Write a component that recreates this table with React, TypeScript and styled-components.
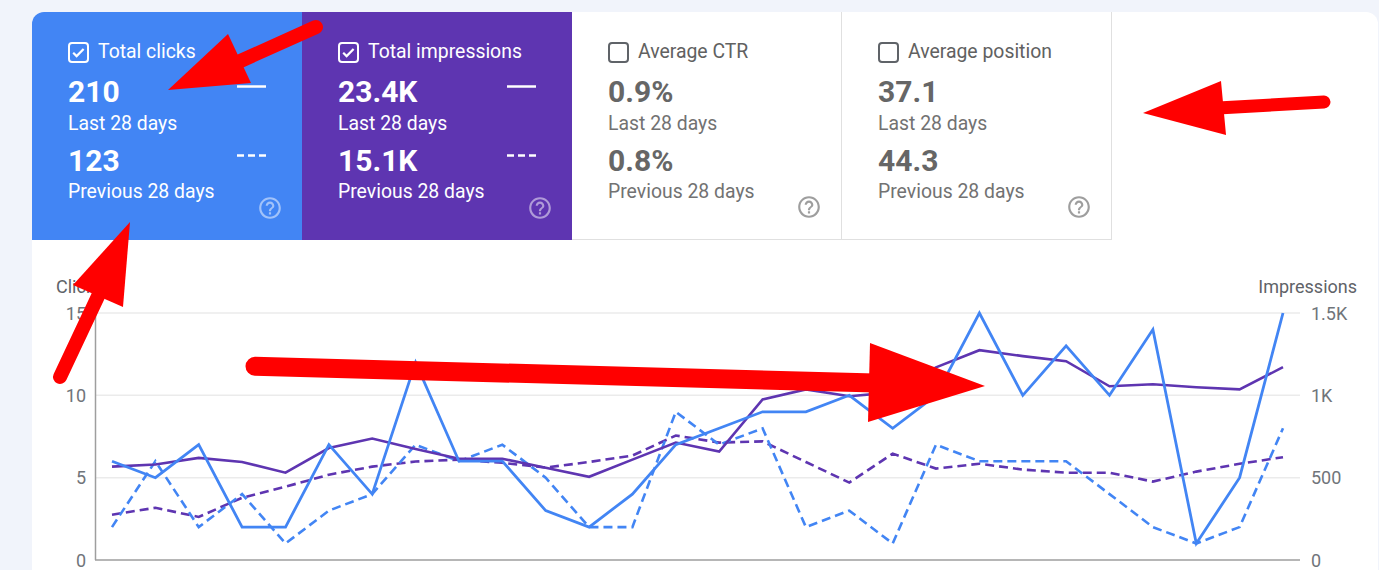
import React from "react";
import styled, { createGlobalStyle, css } from "styled-components";

const GlobalStyle = createGlobalStyle`
  html, body { margin: 0; padding: 0; }
  body {
    background: #f1f4fb;
    font-family: Roboto, "Liberation Sans", Arial, sans-serif;
    overflow: hidden;
  }
`;

type Variant = "clicks" | "impressions" | "plain";

const Panel = styled.div`
  margin: 12px 1px 0 32px;
  background: #ffffff;
  border-radius: 12px 12px 0 0;
  overflow: hidden;
  height: 558px;
  display: flex;
  flex-direction: column;
`;

const CardsRow = styled.div`
  display: flex;
  flex: none;
`;

const MetricCard = styled.div<{ $variant: Variant }>`
  position: relative;
  box-sizing: border-box;
  width: 270px;
  height: 228px;
  padding: 28px 36px 0 36px;
  display: flex;
  flex-direction: column;
  ${(p) =>
    p.$variant === "clicks"
      ? css`
          background: #4285f4;
          color: #ffffff;
        `
      : p.$variant === "impressions"
      ? css`
          background: #5e35b1;
          color: #ffffff;
        `
      : css`
          background: #ffffff;
          color: #616161;
          border-right: 1px solid #e0e0e0;
          border-bottom: 1px solid #e0e0e0;
        `}
`;

const TitleRow = styled.div`
  display: flex;
  align-items: center;
  gap: 9px;
  height: 24px;
`;

const Title = styled.span<{ $muted: boolean }>`
  font-size: 19.4px;
  line-height: 24px;
  color: ${(p) => (p.$muted ? "#616161" : "#ffffff")};
`;

const ValueRow = styled.div<{ $top: number }>`
  display: flex;
  justify-content: space-between;
  align-items: flex-start;
  margin-top: ${(p) => p.$top}px;
`;

const Value = styled.span<{ $muted: boolean }>`
  font-size: 30px;
  line-height: 38px;
  font-weight: 700;
  color: ${(p) => (p.$muted ? "#666666" : "#ffffff")};
`;

const PeriodLabel = styled.div<{ $muted: boolean; $top: number }>`
  font-size: 19.4px;
  line-height: 24px;
  margin-top: ${(p) => p.$top}px;
  color: ${(p) => (p.$muted ? "#727272" : "#ffffff")};
`;

const LegendMark = styled.svg`
  margin-top: 12px;
  flex: none;
`;

const HelpIcon = styled.svg<{ $muted: boolean }>`
  position: absolute;
  right: 19px;
  bottom: 19px;
  width: 26px;
  height: 26px;
  fill: ${(p) => (p.$muted ? "#9e9e9e" : "rgba(255,255,255,0.5)")};
`;

const ChartArea = styled.div`
  flex: 1;
  position: relative;
`;

const ChartSvg = styled.svg`
  display: block;
  font-family: Roboto, "Liberation Sans", Arial, sans-serif;
`;

const ArrowLayer = styled.svg`
  position: fixed;
  top: 0;
  left: 0;
  pointer-events: none;
  z-index: 10;
`;

function Checkbox({ checked, color }: { checked: boolean; color: string }) {
  return (
    <svg width="21" height="21" viewBox="0 0 21 21">
      <rect x="1" y="1" width="19" height="19" rx="3" fill="none" stroke={color} strokeWidth="2" />
      {checked && (
        <path d="M5.2 10.8 L8.6 14.1 L15.6 7" fill="none" stroke={color} strokeWidth="2.2" />
      )}
    </svg>
  );
}

const HELP_PATH =
  "M11 18h2v-2h-2v2zm1-16C6.48 2 2 6.48 2 12s4.48 10 10 10 10-4.48 10-10S17.52 2 12 2zm0 18c-4.41 0-8-3.590-8-8s3.59-8 8-8 8 3.59 8 8-3.59 8-8 8zm0-14c-2.21 0-4 1.79-4 4h2c0-1.1.9-2 2-2s2 .9 2 2c0 2-3 1.75-3 5h2c0-2.25 3-2.5 3-5 0-2.21-1.79-4-4-4z";

type Metric = {
  title: string;
  current: string;
  previous: string;
  variant: Variant;
  checked: boolean;
};

const metrics: Metric[] = [
  { title: "Total clicks", current: "210", previous: "123", variant: "clicks", checked: true },
  { title: "Total impressions", current: "23.4K", previous: "15.1K", variant: "impressions", checked: true },
  { title: "Average CTR", current: "0.9%", previous: "0.8%", variant: "plain", checked: false },
  { title: "Average position", current: "37.1", previous: "44.3", variant: "plain", checked: false },
];

function Card({ m }: { m: Metric }) {
  const muted = m.variant === "plain";
  const fg = muted ? "#5f6368" : "#ffffff";
  return (
    <MetricCard $variant={m.variant}>
      <TitleRow>
        <Checkbox checked={m.checked} color={fg} />
        <Title $muted={muted}>{m.title}</Title>
      </TitleRow>
      <ValueRow $top={9}>
        <Value $muted={muted}>{m.current}</Value>
        {!muted && (
          <LegendMark width="29" height="3" viewBox="0 0 29 3">
            <line x1="0" y1="1.5" x2="29" y2="1.5" stroke="#fff" strokeWidth="2.5" />
          </LegendMark>
        )}
      </ValueRow>
      <PeriodLabel $muted={muted} $top={1}>Last 28 days</PeriodLabel>
      <ValueRow $top={6}>
        <Value $muted={muted}>{m.previous}</Value>
        {!muted && (
          <LegendMark width="29" height="3" viewBox="0 0 29 3">
            <line x1="0" y1="1.5" x2="29" y2="1.5" stroke="#fff" strokeWidth="2.5" strokeDasharray="7 4" />
          </LegendMark>
        )}
      </ValueRow>
      <PeriodLabel $muted={muted} $top={0}>Previous 28 days</PeriodLabel>
      <HelpIcon $muted={muted} viewBox="0 0 24 24">
        <path d={HELP_PATH} />
      </HelpIcon>
    </MetricCard>
  );
}

const clicks = [6, 5, 7, 2, 2, 7, 4, 12, 6, 6, 3, 2, 4, 7, 8, 9, 9, 10, 8, 10, 15, 10, 13, 10, 14, 1, 5, 15];
const clicksPrev = [2, 6, 2, 4, 1, 3, 4, 7, 6, 7, 5, 2, 2, 9, 7, 8, 2, 3, 1, 7, 6, 6, 6, 4, 2, 1, 2, 8];
const impressions = [567, 580, 620, 595, 530, 680, 737, 675, 615, 615, 560, 505, 610, 713, 658, 975, 1036, 994, 1018, 1170, 1274, 1238, 1207, 1055, 1067, 1049, 1036, 1171];
const impressionsPrev = [275, 317, 262, 378, 445, 518, 567, 598, 610, 590, 561, 595, 634, 756, 713, 720, 595, 470, 646, 555, 585, 549, 530, 530, 476, 537, 584, 624];

const X0 = 112;
const DX = (1283 - 112) / 27;
const BASE = 560;
const TOP = 313;
const H = BASE - TOP;

function points(data: number[], max: number) {
  return data.map((v, i) => `${(X0 + i * DX).toFixed(1)},${(BASE - (v / max) * H).toFixed(1)}`).join(" ");
}

function Chart() {
  const grid = [0, 1, 2, 3].map((k) => BASE - (k * H) / 3);
  const leftLabels = ["0", "5", "10", "15"];
  const rightLabels = ["0", "500", "1K", "1.5K"];
  return (
    <ChartSvg width="1346" height="330" viewBox="32 240 1346 330">
      <text x="56" y="293" fontSize="18" fill="#5f6368">Clicks</text>
      <text x="1357" y="293" fontSize="18" fill="#5f6368" textAnchor="end">Impressions</text>
      {grid.slice(1).map((y) => (
        <line key={y} x1="95" x2="1300" y1={y} y2={y} stroke="#ebebeb" strokeWidth="1.5" />
      ))}
      <line x1="95" x2="1300" y1={BASE} y2={BASE} stroke="#9e9e9e" strokeWidth="1.5" />
      <line x1="95.5" x2="95.5" y1={TOP} y2={BASE} stroke="#9e9e9e" strokeWidth="1.5" />
      {grid.map((y, k) => (
        <text key={"l" + k} x="86" y={y + 6.5} fontSize="18" fill="#70757a" textAnchor="end">
          {leftLabels[k]}
        </text>
      ))}
      {grid.map((y, k) => (
        <text key={"r" + k} x="1311" y={y + 6.5} fontSize="18" fill="#70757a">
          {rightLabels[k]}
        </text>
      ))}
      <polyline points={points(impressionsPrev, 1500)} fill="none" stroke="#5e35b1" strokeWidth="2.6" strokeDasharray="9 5" />
      <polyline points={points(clicksPrev, 15)} fill="none" stroke="#4285f4" strokeWidth="2.6" strokeDasharray="9 5" />
      <polyline points={points(impressions, 1500)} fill="none" stroke="#5e35b1" strokeWidth="2.6" />
      <polyline points={points(clicks, 15)} fill="none" stroke="#4285f4" strokeWidth="2.8" />
    </ChartSvg>
  );
}

function Arrows() {
  const red = "#ff0000";
  return (
    <ArrowLayer width="1379" height="570" viewBox="0 0 1379 570">
      <line x1="316" y1="27" x2="236" y2="63" stroke={red} strokeWidth="14" strokeLinecap="round" />
      <polygon points="168,90 228,34 251,83" fill={red} />
      <line x1="60" y1="377" x2="100" y2="292" stroke={red} strokeWidth="14" strokeLinecap="round" />
      <polygon points="130,222 73,285 123,307" fill={red} />
      <line x1="1324" y1="102" x2="1218" y2="108" stroke={red} strokeWidth="13" strokeLinecap="round" />
      <polygon points="1143,113 1221,81 1226,135" fill={red} />
      <line x1="255" y1="366.3" x2="875" y2="383" stroke={red} strokeWidth="19" strokeLinecap="round" />
      <polygon points="985,386 870,343 868,422" fill={red} />
    </ArrowLayer>
  );
}

export default function App() {
  return (
    <>
      <GlobalStyle />
      <Panel>
        <CardsRow>
          {metrics.map((m) => (
            <Card key={m.title} m={m} />
          ))}
        </CardsRow>
        <ChartArea>
          <Chart />
        </ChartArea>
      </Panel>
      <Arrows />
    </>
  );
}
